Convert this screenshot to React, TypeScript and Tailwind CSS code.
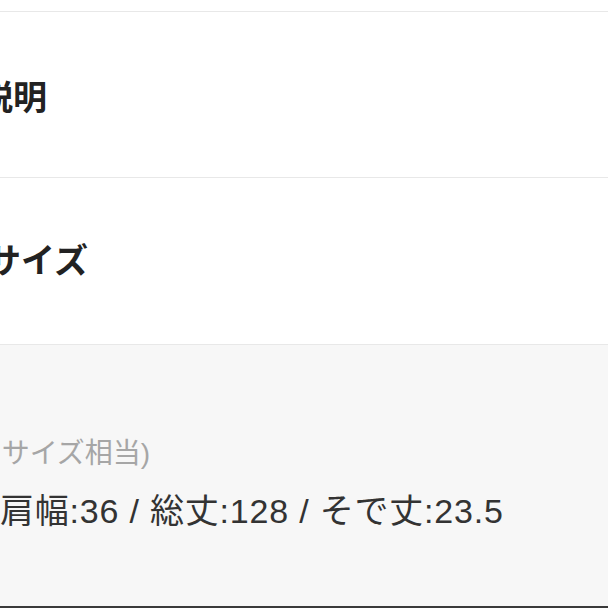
import React from 'react';

const FONT = {
  fontFamily: '"Liberation Sans", "Noto Sans CJK JP", sans-serif',
};

const SectionHeading: React.FC<{ title: string; className: string; offset: string }> = ({
  title,
  className,
  offset,
}) => (
  <div className={`flex shrink-0 items-center border-b border-[#e8e8e8] bg-white ${className}`}>
    <h2 className={`whitespace-nowrap text-[34px] font-bold leading-none text-[#222222] ${offset}`}>
      {title}
    </h2>
  </div>
);

export default function App() {
  return (
    <div className="flex h-[608px] w-[608px] flex-col overflow-hidden bg-white" style={FONT}>
      {/* tail of previous row */}
      <div className="h-[12px] shrink-0 border-b border-[#e8e8e8] bg-white" />

      <SectionHeading title="商品の説明" className="h-[166px] pt-[7px]" offset="-ml-[123px]" />
      <SectionHeading title="商品のサイズ" className="h-[167px]" offset="-ml-[115px]" />

      {/* size detail */}
      <div className="flex-1 bg-[#f7f7f7] pt-[89px]">
        <p className="-ml-[31px] whitespace-nowrap text-[28px] leading-[40px] text-[#a6a6a6]">
          (Mサイズ相当)
        </p>
        <p className="mt-[17px] whitespace-nowrap text-[34px] leading-[40px] tracking-[0.8px] text-[#333333]">
          肩幅:36 / 総丈:128 / そで丈:23.5
        </p>
      </div>

      <div className="h-[2px] shrink-0 bg-[#3a3a3a]" />
    </div>
  );
}
